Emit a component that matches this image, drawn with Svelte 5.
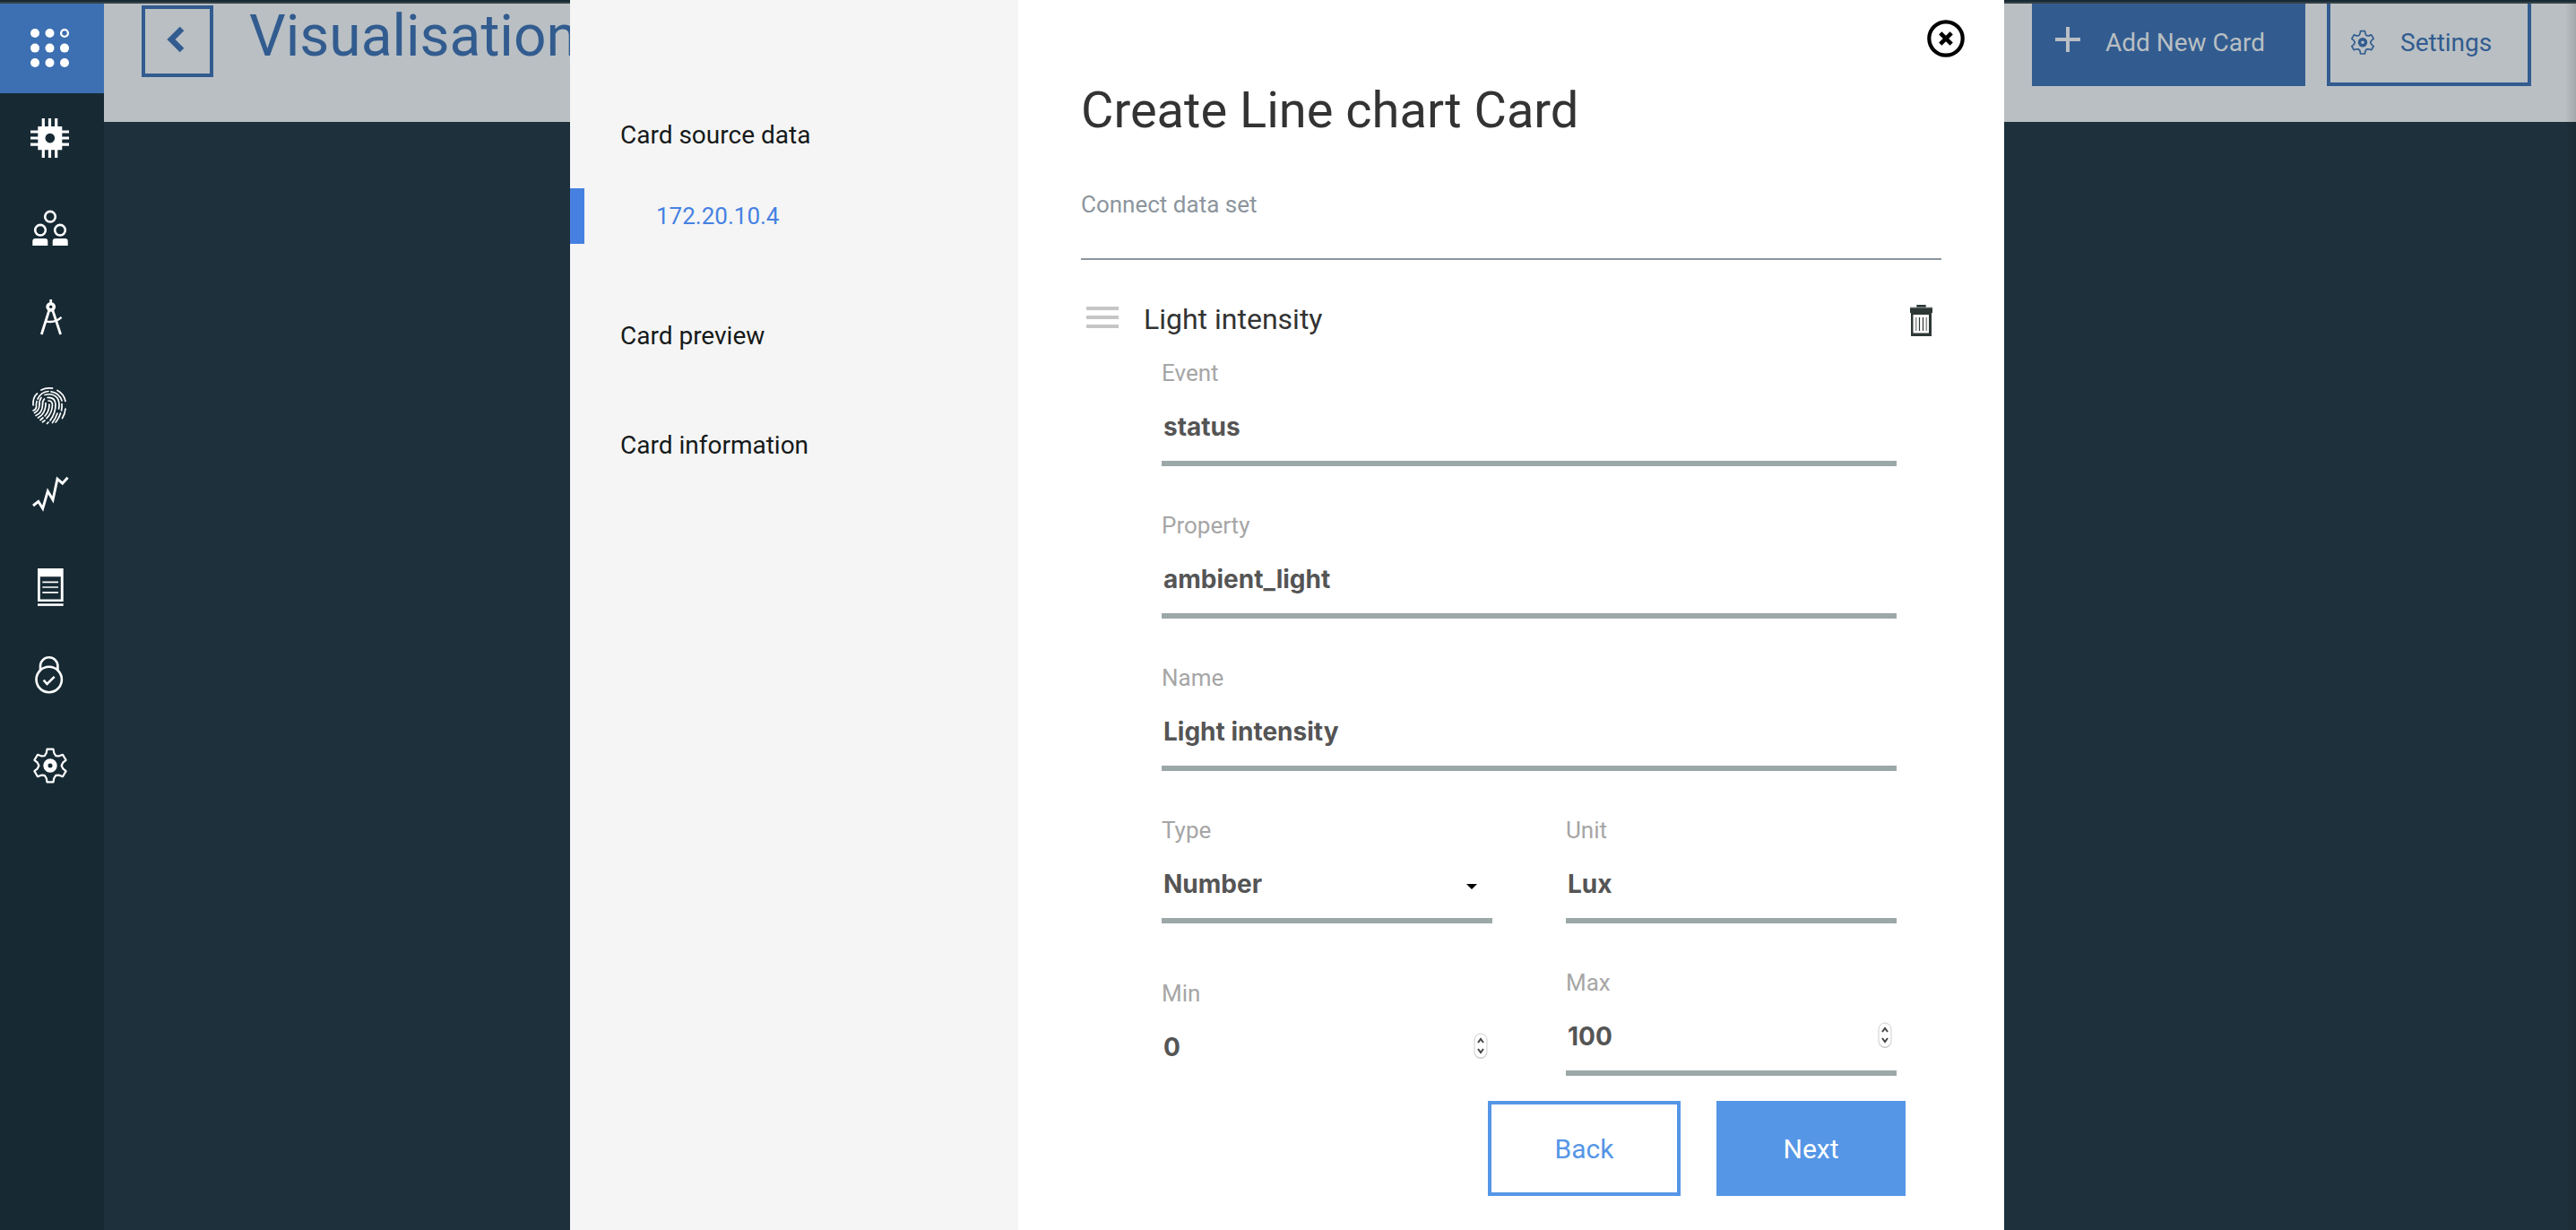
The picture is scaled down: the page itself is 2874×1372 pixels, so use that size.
<script>
  let eventName = $state('status');
  let property = $state('ambient_light');
  let name = $state('Light intensity');
  let type = $state('Number');
  let unit = $state('Lux');
  let min = $state(0);
  let max = $state(100);

  const nav = ['Boards', 'Devices', 'Members', 'Apps', 'Access', 'Usage', 'Rules', 'Security', 'Settings'];

  // Outline of a six-toothed gear centred in a 48-unit box.
  function gear() {
    const pts = [];
    for (let k = 0; k < 6; k++) {
      const a = -90 + 60 * k;
      for (const [r, d] of [[14.6, -17], [18.6, -11], [18.6, 11], [14.6, 17], [12.6, 30]]) {
        const t = ((a + d) * Math.PI) / 180;
        pts.push(`${(24 + r * Math.cos(t)).toFixed(1)},${(24 + r * Math.sin(t)).toFixed(1)}`);
      }
    }
    return pts.join(' ');
  }
  const gearPoints = gear();
</script>

{#snippet spinner()}
  <svg class="spin" viewBox="0 0 16 30" aria-hidden="true">
    <rect x="1" y="2" width="14" height="27" rx="7" fill="#c4c4c4" />
    <rect x="1" y="1" width="14" height="27" rx="7" fill="#fff" stroke="#cfcfcf" />
    <path d="M5 11l3-4 3 4M5 18l3 4 3-4" fill="none" stroke="#444" stroke-width="2" />
  </svg>
{/snippet}

<div class="page">
  <div class="topline"></div>
  <div class="shell">
    <nav class="side" aria-label="Main">
      {#each nav as item, i}
        <a href="#{item.toLowerCase()}" class:active={i === 0} aria-label={item}>
          <svg viewBox="0 0 48 48" fill="none" stroke="#fff" stroke-width="2.6">
            {#if i === 0}
              <g fill="#fff" stroke="none">
                <circle cx="7" cy="7" r="5" /><circle cx="23.5" cy="7" r="5" />
                <circle cx="7" cy="23.6" r="5" /><circle cx="23.5" cy="23.6" r="5" /><circle cx="40" cy="23.6" r="5" />
                <circle cx="7" cy="40" r="5" /><circle cx="23.5" cy="40" r="5" /><circle cx="40" cy="40" r="5" />
              </g>
              <circle cx="40" cy="7" r="3.9" stroke-width="2.3" />
            {:else if i === 1}
              <path fill="#fff" stroke="none" fill-rule="evenodd" d="M10.300 11h27v26.300h-27zM23.800 18.800a5.300 5.300 0 1 0 .01 0z" />
              <path stroke-width="3.200" d="M16.300 2v10M23.500 2v10M30.700 2v10M16.300 36v10M23.500 36v10M30.700 36v10M2 17h9M2 24h9M2 31.200h9M36.500 17H45M36.500 24H45M36.500 31.200H45" />
            {:else if i === 2}
              <circle cx="24" cy="11.7" r="5.8" /><circle cx="13" cy="26.7" r="5.8" /><circle cx="35" cy="26.7" r="5.8" />
              <path fill="#fff" stroke="none" d="M4.3 44v-5q0-3 3-3h11q3 0 3 3v5zM26.7 44v-5q0-3 3-3h11q3 0 3 3v5z" />
            {:else if i === 3}
              <circle cx="24.7" cy="12.3" r="3.6" stroke-width="3.6" />
              <path d="M24.7 4v5M22.7 16.5L14.3 43M26.9 16.5L35.6 43" stroke-width="2.8" />
              <path d="M18.8 28.3q10.5 2.4 17.8-4.4" stroke-width="2.4" />
            {:else if i === 4}
              <g stroke-width="1.7" stroke-linecap="round">
                <path d="M14 5Q20 2 26.500 3.200M32 5.500Q39.500 9.500 41 17.500M5 22Q4.500 13 9.500 9" />
                <path d="M10 15Q14 7 22 6.500M25 6.800Q34 8 37 17M9 17.500Q8 22 8.500 24Q8 27 5 28" />
                <path d="M18 10.500Q27 8 32 14Q35 19 33.500 26M14 13.500Q11.500 17 12 22Q11.500 28 6.500 30.500" />
                <path d="M21 13.500Q29.500 13 30 21Q30 31 24 39M17.500 15Q15 17.500 15.500 22Q15 31 8 33.500" />
                <path d="M22 17Q26.500 17 26.500 22Q26 31 20 36.500M19 19.500V22Q18 32 10.500 36" />
                <path d="M23 21Q23 29 18 34M16 36L13 38.500M18 39L15.500 40.800M22 41L20.500 42.500" />
                <path d="M37 20.500Q37.500 24 36.500 28M35.500 31Q33 38 30 41M41 26Q40.500 32 37.500 36.500M32 31Q30 37 26.500 41.500" />
              </g>
            {:else if i === 5}
              <path d="M5 34l5.800-4.700 4.900 8 5.600-19.500 5.700 9.700L32 4.200l5.700 5 5.800-6.500" stroke-width="2.9" />
            {:else if i === 6}
              <path fill="#fff" stroke="none" fill-rule="evenodd" d="M10 4h28.700v37H10zM12.800 13.300v25.200h23V13.300z" />
              <path stroke-width="1.700" d="M15.300 19.300H33M15.300 25H33M15.300 30.800H33" />
              <path d="M10 44.600h28.700" />
            {:else if i === 7}
              <circle cx="22.700" cy="28" r="14.200" />
              <path d="M13 18v-5a9.700 9.700 0 0 1 19.400 0v5" />
              <path d="M16.600 28.700l3.900 4.200 8.200-8" />
            {:else}
              <polygon points={gearPoints} stroke-linejoin="round" stroke-width="2.200" />
              <circle cx="24" cy="24" r="5.100" stroke-width="5.200" />
            {/if}
          </svg>
        </a>
      {/each}
    </nav>

    <main>
      <header>
        <button class="prev" aria-label="Go back">
          <svg viewBox="0 0 72 72"><path d="M41 22L29 34l12 12" fill="none" stroke="#325c8f" stroke-width="6.500" /></svg>
        </button>
        <h1>Visualisation</h1>
        <div class="actions">
          <button class="add">
            <svg viewBox="0 0 28 36"><path d="M0 14h28M14 0v28" stroke="#b9bfc3" stroke-width="4" /></svg>
            Add New Card
          </button>
          <button class="settings">
            <svg viewBox="4 -1 40 52"><g fill="none" stroke="#325c8f"><polygon points={gearPoints} stroke-linejoin="round" stroke-width="2.400" /><circle cx="24" cy="24" r="5.100" stroke-width="5" /></g></svg>
            Settings
          </button>
        </div>
      </header>
      <div class="edge"></div>
    </main>
  </div>
</div>

<div class="overlay">
  <div class="modal" role="dialog" aria-modal="true" aria-labelledby="title">
    <aside>
      <a href="#source" class="step">Card source data</a>
      <a href="#device" class="step current">172.20.10.4</a>
      <a href="#preview" class="step after">Card preview</a>
      <a href="#info" class="step last">Card information</a>
    </aside>

    <section>
      <div class="closebar">
        <button class="close" aria-label="Close">
          <svg viewBox="0 0 42 42" fill="none" stroke="#000"><circle cx="21" cy="21" r="18.700" stroke-width="4.200" /><path d="M14.800 14.800l12.400 12.400M27.200 14.800L14.800 27.200" stroke-width="4.600" /></svg>
        </button>
      </div>
      <div class="scroll">
        <h2 id="title">Create Line chart Card</h2>
        <h3>Connect data set</h3>
        <div class="row">
          <button class="grip" aria-label="Reorder">
            <svg viewBox="0 0 36 36"><path d="M0 6h36M0 16h36M0 26h36" stroke="#c6c6c6" stroke-width="4" /></svg>
          </button>
          <span>Light intensity</span>
          <button class="trash" aria-label="Delete">
            <svg viewBox="0 0 27 37"><path fill="#2d3836" fill-rule="evenodd" d="M8.300 2h10.400v3H26v6h-1v26H2V11H1V5h7.300zM4.500 13v20.500H22V13z" /><path stroke="#8b918f" stroke-width="1.600" d="M7.700 16v15M19.300 16v15" /><path stroke="#2d3836" stroke-width="1.200" d="M11.500 16v15M15.500 16v15" /><path stroke="#9ba09f" d="M1 5h25" /></svg>
          </button>
        </div>

        <form>
          <div class="field">
            <label for="event">Event</label>
            <input id="event" type="text" bind:value={eventName} />
          </div>
          <div class="field">
            <label for="property">Property</label>
            <input id="property" type="text" bind:value={property} />
          </div>
          <div class="field">
            <label for="name">Name</label>
            <input id="name" type="text" bind:value={name} />
          </div>
          <div class="pair">
            <div class="col">
              <div class="field pick">
                <label for="type">Type</label>
                <div class="control">
                  <select id="type" bind:value={type}>
                    <option>Number</option>
                    <option>Text</option>
                  </select>
                  <svg class="caret" viewBox="0 0 12 6" aria-hidden="true"><path d="M0 0h12L6 6z" /></svg>
                </div>
              </div>
              <div class="field">
                <label for="min">Min</label>
                <div class="control">
                  <input id="min" type="number" bind:value={min} />
                  {@render spinner()}
                </div>
              </div>
            </div>
            <div class="col">
              <div class="field">
                <label for="unit">Unit</label>
                <input id="unit" type="text" bind:value={unit} />
              </div>
              <div class="field">
                <label for="max">Max</label>
                <div class="control">
                  <input id="max" type="number" bind:value={max} />
                  {@render spinner()}
                </div>
              </div>
            </div>
          </div>
        </form>
      </div>
      <footer>
        <button class="back">Back</button>
        <button class="next">Next</button>
      </footer>
    </section>
  </div>
</div>

<style>
  :global(body) { background: #1e303b; }
  * { box-sizing: border-box; }
  .page, .overlay { font-family: Roboto, 'Open Sans', sans-serif; }
  button, input, select { font: inherit; margin: 0; border: 0; border-radius: 0; background: none; padding: 0; cursor: pointer; }
  svg { display: block; flex: none; }
  h1, h2, h3 { margin: 0; font-weight: 400; }
  a { text-decoration: none; }

  .page { display: flex; flex-direction: column; height: 100vh; overflow: hidden; }
  .topline { flex: none; height: 4px; background: #172a34; border-bottom: 2px solid #364146; }
  .shell { display: flex; flex: 1; min-height: 0; }
  .side { flex: none; width: 116px; background: #172a34; }
  .side a { display: flex; align-items: center; justify-content: center; height: 100px; padding-right: 4px; }
  .side a.active { background: #3d70b2; }
  .side svg { width: 48px; height: 48px; }

  main { position: relative; flex: 1; min-width: 0; background: #1e303b; }
  header { display: flex; align-items: flex-start; height: 132px; padding: 0 50px 0 42px; background: #b9bfc3; }
  .prev { width: 80px; height: 80px; margin-top: 2px; border: 4px solid #325c8f; }
  .prev svg { width: 72px; height: 72px; }
  h1 { margin-left: 40px; padding-top: 2px; font-size: 64px; line-height: 70px; color: #325c8f; }
  .actions { display: flex; gap: 24px; margin-left: auto; }
  .actions button { display: flex; align-items: center; gap: 28px; height: 92px; font-size: 28px; line-height: 34px; }
  .actions svg { width: 28px; height: 36px; }
  .add { width: 305px; padding: 0 26px 4px; background: #325c8f; color: #b9bfc3; }
  .actions .settings { width: 228px; padding: 0 22px; border: 4px solid #325c8f; border-top: 0; color: #325c8f; }
  .edge { position: absolute; top: 0; right: 0; bottom: 0; width: 12px; background: linear-gradient(to right, rgba(0, 0, 0, 0), rgba(0, 0, 0, 0.12)); }

  .overlay { position: fixed; inset: 0; display: flex; justify-content: center; padding-right: 2px; }
  .modal { display: flex; width: 100%; max-width: 1600px; background: #fff; }
  aside { display: flex; flex-direction: column; flex: 5; min-width: 0; padding-top: 119px; background: #f5f5f5; }
  .step { display: flex; align-items: center; height: 62px; padding-left: 56px; font-size: 28px; color: #151a1a; }
  .step.current { margin-top: 29px; padding-left: 80px; border-left: 16px solid #4681e2; font-size: 26px; color: #4681e2; }
  .step.after { margin-top: 71px; }
  .step.last { margin-top: 60px; }

  section { display: flex; flex-direction: column; flex: 11; min-width: 0; }
  .closebar { display: flex; justify-content: flex-end; padding: 22px 44px 0; }
  .close svg { width: 42px; height: 42px; }
  .scroll { flex: 1; min-height: 0; padding: 26px 70px 0; overflow-y: auto; scrollbar-width: none; }
  h2 { font-size: 56px; line-height: 66px; color: #333; }
  h3 { margin-top: 57px; padding-bottom: 45px; border-bottom: 2px solid #8c959d; font-size: 26px; line-height: 30px; color: #8c959d; }
  .row { display: flex; align-items: center; gap: 28px; height: 38px; margin-top: 47px; padding: 0 9px 0 6px; font-size: 32px; line-height: 38px; color: #333; }
  .grip svg { width: 36px; height: 36px; }
  .trash { margin-left: auto; }
  .trash svg { width: 27px; height: 37px; }

  form { display: flex; flex-direction: column; gap: 51px; padding: 26px 50px 0 90px; }
  label { display: block; font-size: 26px; line-height: 30px; color: #a6a6a6; }
  input, select { display: block; width: 100%; height: 89px; padding: 6px 2px 0; border-bottom: 6px solid #9ca8a8; outline: 0; appearance: none; font-family: Inter, 'Liberation Sans', sans-serif; font-size: 28px; font-weight: 700; color: #555; }
  input[type='number'] { appearance: textfield; }
  input[type='number']::-webkit-inner-spin-button { display: none; }
  .pair { display: grid; grid-template-columns: 1fr 1fr; gap: 82px; }
  .col { display: flex; flex-direction: column; gap: 51px; }
  .pick { padding-bottom: 12px; }
  .control { position: relative; }
  .caret { position: absolute; top: 45px; right: 17px; width: 12px; height: 6px; pointer-events: none; }
  .spin { position: absolute; top: 29px; right: 5px; width: 16px; height: 30px; pointer-events: none; }

  footer { display: flex; justify-content: flex-end; gap: 40px; padding: 24px 110px 38px; }
  footer button { height: 106px; font-size: 30px; }
  .back { width: 215px; border: 4px solid #5596e6; color: #5596e6; }
  .next { width: 211px; background: #5596e6; color: #fff; }
</style>
